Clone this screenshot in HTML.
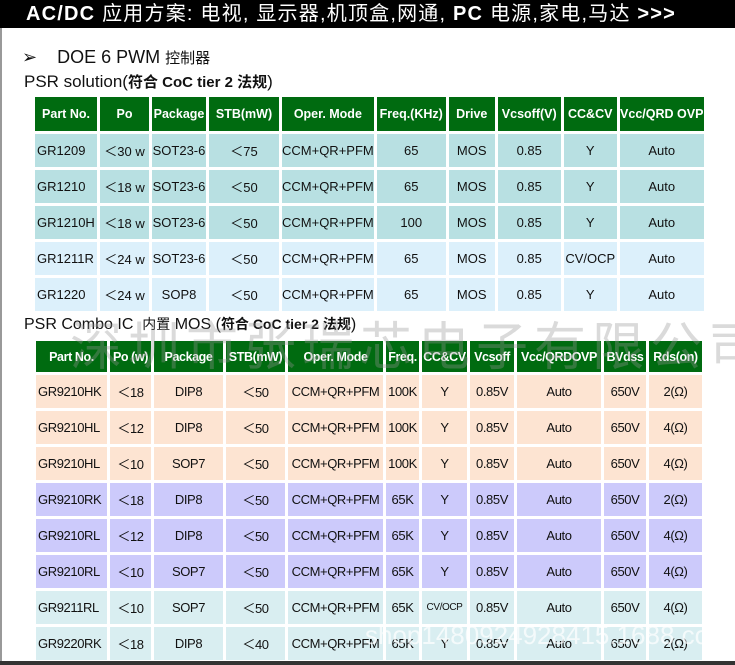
<!DOCTYPE html>
<html><head><meta charset="utf-8"><style>
*{margin:0;padding:0;box-sizing:border-box}
body{width:735px;height:665px;background:#fff;position:relative;overflow:hidden;font-family:"Liberation Sans","Noto Sans CJK SC",sans-serif;color:#111}
.top{position:absolute;left:0;top:0;width:735px;height:28px;background:#000;color:#fff;font-size:20px;font-weight:bold;line-height:28px;padding-left:26px;letter-spacing:1.2px}
.top span{font-weight:normal}
.lb{position:absolute;left:0;top:28px;width:2px;height:637px;background:#999}
.bb{position:absolute;left:0;top:661px;width:735px;height:4px;background:#333}
.t{position:absolute;font-size:17px;white-space:nowrap}
table{position:absolute;border-collapse:separate;border-spacing:3px;table-layout:fixed}
td{text-align:center;font-size:13px;white-space:nowrap;overflow:hidden;padding:0}
td:first-child{text-align:left;padding-left:2px}
th{background:#006b10;color:#fff;font-size:12.5px;font-weight:bold;white-space:nowrap;overflow:hidden;padding:0}
.a td{background:#b8e0e2}.b td{background:#dcf0fb}
.p td{background:#fde4d2}.l td{background:#cccafb}.c td{background:#d9eef1}
#t2 td,#t2 th{letter-spacing:-0.4px}
.wm{position:absolute;left:70px;top:305px;font-size:52px;color:rgba(150,150,150,0.35);letter-spacing:6px;white-space:nowrap}
.wm2{position:absolute;left:365px;top:620px;font-size:26px;color:rgba(255,255,255,0.7);white-space:nowrap}
</style></head><body>
<div class="top">AC/DC <span>应用方案:</span> <span>电视,</span> <span>显示器,机顶盒,网通,</span> PC <span>电源,家电,马达</span> &gt;&gt;&gt;</div>
<div class="lb"></div>
<div class="t" style="left:22px;top:47px;font-size:18px">➢&nbsp;&nbsp;&nbsp;&nbsp;DOE 6 PWM <span style="font-size:15px">控制器</span></div>
<div class="t" style="left:24px;top:71px">PSR solution(<span style="font-size:15px;font-weight:bold">符合 CoC tier 2 法规</span>)</div>
<table style="left:32px;top:94px">
<colgroup><col style="width:62px"><col style="width:49px"><col style="width:54px"><col style="width:70px"><col style="width:89px"><col style="width:69px"><col style="width:46px"><col style="width:63px"><col style="width:53px"><col style="width:84px"></colgroup>
<tr style="height:34px"><th>Part No.</th><th>Po</th><th>Package</th><th>STB(mW)</th><th>Oper. Mode</th><th>Freq.(KHz)</th><th>Drive</th><th>Vcsoff(V)</th><th>CC&amp;CV</th><th>Vcc/QRD OVP</th></tr>
<tr class="a" style="height:33px"><td>GR1209</td><td>＜30 w</td><td>SOT23-6</td><td>＜75</td><td>CCM+QR+PFM</td><td>65</td><td>MOS</td><td>0.85</td><td>Y</td><td>Auto</td></tr>
<tr class="a" style="height:33px"><td>GR1210</td><td>＜18 w</td><td>SOT23-6</td><td>＜50</td><td>CCM+QR+PFM</td><td>65</td><td>MOS</td><td>0.85</td><td>Y</td><td>Auto</td></tr>
<tr class="a" style="height:33px"><td>GR1210H</td><td>＜18 w</td><td>SOT23-6</td><td>＜50</td><td>CCM+QR+PFM</td><td>100</td><td>MOS</td><td>0.85</td><td>Y</td><td>Auto</td></tr>
<tr class="b" style="height:33px"><td>GR1211R</td><td>＜24 w</td><td>SOT23-6</td><td>＜50</td><td>CCM+QR+PFM</td><td>65</td><td>MOS</td><td>0.85</td><td>CV/OCP</td><td>Auto</td></tr>
<tr class="b" style="height:33px"><td>GR1220</td><td>＜24 w</td><td>SOP8</td><td>＜50</td><td>CCM+QR+PFM</td><td>65</td><td>MOS</td><td>0.85</td><td>Y</td><td>Auto</td></tr>
</table>
<div class="t" style="left:24px;top:314px;font-size:16px">PSR Combo IC &nbsp;<span style="font-size:14px">内置</span> MOS (<span style="font-size:14px;font-weight:bold">符合 CoC tier 2 法规</span>)</div>
<table id="t2" style="left:33px;top:338px">
<colgroup><col style="width:71px"><col style="width:41px"><col style="width:69px"><col style="width:59px"><col style="width:95px"><col style="width:33px"><col style="width:45px"><col style="width:44px"><col style="width:84px"><col style="width:42px"><col style="width:53px"></colgroup>
<tr style="height:31px"><th>Part No.</th><th>Po (w)</th><th>Package</th><th>STB(mW)</th><th>Oper. Mode</th><th>Freq.</th><th>CC&amp;CV</th><th>Vcsoff</th><th>Vcc/QRDOVP</th><th>BVdss</th><th>Rds(on)</th></tr>
<tr class="p" style="height:33px"><td>GR9210HK</td><td>＜18</td><td>DIP8</td><td>＜50</td><td>CCM+QR+PFM</td><td>100K</td><td>Y</td><td>0.85V</td><td>Auto</td><td>650V</td><td>2(Ω)</td></tr>
<tr class="p" style="height:33px"><td>GR9210HL</td><td>＜12</td><td>DIP8</td><td>＜50</td><td>CCM+QR+PFM</td><td>100K</td><td>Y</td><td>0.85V</td><td>Auto</td><td>650V</td><td>4(Ω)</td></tr>
<tr class="p" style="height:33px"><td>GR9210HL</td><td>＜10</td><td>SOP7</td><td>＜50</td><td>CCM+QR+PFM</td><td>100K</td><td>Y</td><td>0.85V</td><td>Auto</td><td>650V</td><td>4(Ω)</td></tr>
<tr class="l" style="height:33px"><td>GR9210RK</td><td>＜18</td><td>DIP8</td><td>＜50</td><td>CCM+QR+PFM</td><td>65K</td><td>Y</td><td>0.85V</td><td>Auto</td><td>650V</td><td>2(Ω)</td></tr>
<tr class="l" style="height:33px"><td>GR9210RL</td><td>＜12</td><td>DIP8</td><td>＜50</td><td>CCM+QR+PFM</td><td>65K</td><td>Y</td><td>0.85V</td><td>Auto</td><td>650V</td><td>4(Ω)</td></tr>
<tr class="l" style="height:33px"><td>GR9210RL</td><td>＜10</td><td>SOP7</td><td>＜50</td><td>CCM+QR+PFM</td><td>65K</td><td>Y</td><td>0.85V</td><td>Auto</td><td>650V</td><td>4(Ω)</td></tr>
<tr class="c" style="height:33px"><td>GR9211RL</td><td>＜10</td><td>SOP7</td><td>＜50</td><td>CCM+QR+PFM</td><td>65K</td><td style="font-size:10px">CV/OCP</td><td>0.85V</td><td>Auto</td><td>650V</td><td>4(Ω)</td></tr>
<tr class="c" style="height:33px"><td>GR9220RK</td><td>＜18</td><td>DIP8</td><td>＜40</td><td>CCM+QR+PFM</td><td>65K</td><td>Y</td><td>0.85V</td><td>Auto</td><td>650V</td><td>2(Ω)</td></tr>
</table>
<div class="wm">深圳市张瑞芯电子有限公司</div>
<div class="wm2">shop1480924928415.1688.com</div>
<div class="bb"></div>
</body></html>
